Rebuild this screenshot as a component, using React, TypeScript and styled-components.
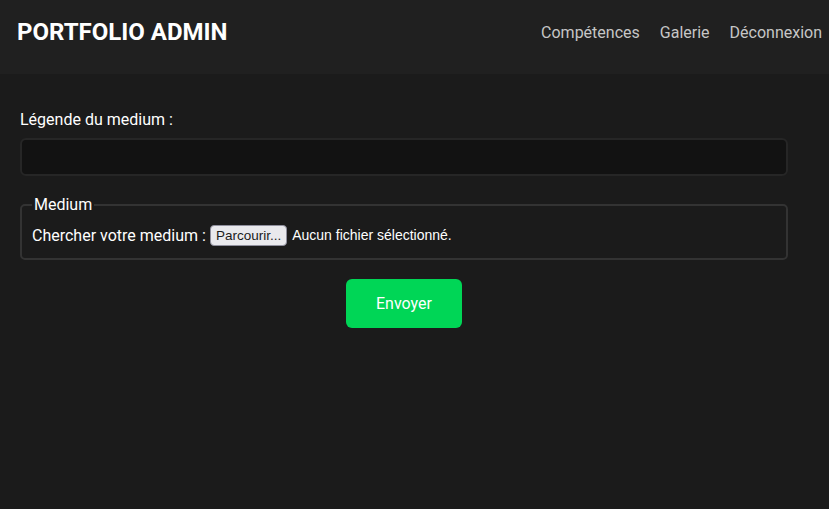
import React from "react";
import styled, { createGlobalStyle } from "styled-components";

const GlobalStyle = createGlobalStyle`
  html, body {
    margin: 0;
    padding: 0;
    background-color: #1b1b1b;
    font-family: Roboto, "Liberation Sans", sans-serif;
    color: #ffffff;
  }
  * { box-sizing: border-box; }
`;

const Header = styled.header`
  display: flex;
  align-items: center;
  justify-content: space-between;
  height: 74px;
  padding: 0 7px 0 17px;
  background-color: #202020;
`;

const Brand = styled.h1`
  margin: 0 0 10px;
  font-size: 24px;
  font-weight: 700;
  color: #ffffff;
`;

const Nav = styled.nav`
  display: flex;
  gap: 20px;
  margin-bottom: 10px;
`;

const NavLink = styled.a`
  font-size: 16px;
  color: #c6c6c6;
  text-decoration: none;
`;

const Main = styled.main`
  display: flex;
  flex-direction: column;
  padding: 36px 41px 0 20px;
`;

const Label = styled.label`
  font-size: 16px;
  line-height: 19px;
  margin-bottom: 9px;
`;

const TextInput = styled.input`
  height: 38px;
  width: 100%;
  background-color: #121212;
  border: 2px solid #262626;
  border-radius: 6px;
  color: #fff;
  padding: 0 10px;
  outline: none;
`;

const Fieldset = styled.fieldset`
  margin: 19px 0 0;
  padding: 0 10px 11px;
  border: 2px solid #333333;
  border-radius: 5px;
`;

const Legend = styled.legend`
  padding: 0 2px;
  font-size: 16px;
  line-height: 19px;
`;

const FileRow = styled.div`
  display: flex;
  align-items: center;
  font-size: 16px;
  height: 24px;
  margin-top: 9px;
`;

const FileButton = styled.span`
  display: inline-flex;
  align-items: center;
  height: 21px;
  margin-left: 4px;
  padding: 0 5px;
  background-color: #e9e9ed;
  border: 1px solid #8f8f9d;
  border-radius: 4px;
  color: #1b1b1b;
  font-family: "Liberation Sans", Arial, sans-serif;
  font-size: 13.5px;
`;

const FileName = styled.span`
  margin-left: 5px;
  font-family: "Liberation Sans", Arial, sans-serif;
  font-size: 14px;
`;

const Submit = styled.button`
  align-self: center;
  margin-top: 19px;
  width: 116px;
  height: 49px;
  border: none;
  border-radius: 6px;
  background-color: #00d656;
  color: #ffffff;
  font-family: Roboto, "Liberation Sans", sans-serif;
  font-size: 16px;
  cursor: pointer;
`;

const App: React.FC = () => {
  return (
    <>
      <GlobalStyle />
      <Header>
        <Brand>PORTFOLIO ADMIN</Brand>
        <Nav>
          <NavLink href="#">Compétences</NavLink>
          <NavLink href="#">Galerie</NavLink>
          <NavLink href="#">Déconnexion</NavLink>
        </Nav>
      </Header>
      <Main>
        <Label htmlFor="legende">Légende du medium :</Label>
        <TextInput id="legende" type="text" />
        <Fieldset>
          <Legend>Medium</Legend>
          <FileRow>
            Chercher votre medium :
            <FileButton>Parcourir...</FileButton>
            <FileName>Aucun fichier sélectionné.</FileName>
          </FileRow>
        </Fieldset>
        <Submit type="button">Envoyer</Submit>
      </Main>
    </>
  );
};

export default App;
